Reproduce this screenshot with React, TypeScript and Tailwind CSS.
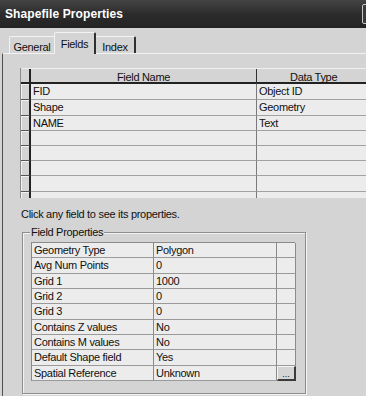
import React from 'react';

const fields = [
  { name: 'FID', type: 'Object ID' },
  { name: 'Shape', type: 'Geometry' },
  { name: 'NAME', type: 'Text' },
  { name: '', type: '' },
  { name: '', type: '' },
  { name: '', type: '' },
  { name: '', type: '' },
  { name: '', type: '' },
];

const rowHeights = ['h-[16px]', 'h-[16px]', 'h-[15px]', 'h-[15px]', 'h-[15px]', 'h-[15px]', 'h-[16px]', 'h-[16px]'];

const props = [
  { k: 'Geometry Type', v: 'Polygon', h: 'h-[15px]' },
  { k: 'Avg Num Points', v: '0', h: 'h-[16px]' },
  { k: 'Grid 1', v: '1000', h: 'h-[15px]' },
  { k: 'Grid 2', v: '0', h: 'h-[15px]' },
  { k: 'Grid 3', v: '0', h: 'h-[16px]' },
  { k: 'Contains Z values', v: 'No', h: 'h-[15px]' },
  { k: 'Contains M values', v: 'No', h: 'h-[15px]' },
  { k: 'Default Shape field', v: 'Yes', h: 'h-[16px]' },
  { k: 'Spatial Reference', v: 'Unknown', h: 'h-[15px]' },
];

export default function App() {
  return (
    <div className="w-[366px] h-[396px] overflow-hidden bg-[#d4d4d4] text-[#111] font-['Liberation_Sans',Arial,sans-serif] flex flex-col">
      {/* title bar */}
      <div className="h-[28px] shrink-0 flex items-center justify-between pl-[5px] bg-gradient-to-b from-[#444] via-[#2c2c2c] to-[#232323]">
        <span className="text-white font-bold text-[12px] tracking-[0.1px]">Shapefile Properties</span>
        <div className="w-[14px] h-[20px] -mr-[10px] border border-[#c8c8c8] rounded-[2px] bg-[#3a3a3a]" />
      </div>

      {/* tabs */}
      <div className="h-[25px] shrink-0 flex items-end pl-[9px] text-[11px] tracking-[-0.3px]">
        <div className="h-[17px] w-[45px] border-t border-l border-[#f2f2f2] rounded-tl-[2px] flex items-start justify-center pt-[2px]">
          General
        </div>
        <div className="h-[22px] w-[42px] -mb-[1px] relative z-10 bg-[#d4d4d4] border-t border-l border-[#f2f2f2] border-r-2 border-r-[#303030] rounded-t-[2px] flex items-start justify-center pt-[3px]">
          Fields
        </div>
        <div className="h-[17px] w-[40px] border-t border-[#f2f2f2] border-r-2 border-r-[#303030] rounded-tr-[2px] flex items-start justify-center pt-[2px]">
          Index
        </div>
      </div>

      {/* panel */}
      <div className="flex-1 ml-[2px] border-t border-t-[#f2f2f2] border-l border-l-[#505050] pl-[17px] pt-[14px] text-[11px] tracking-[-0.3px]">
        {/* fields grid */}
        <div className="h-[130px] overflow-hidden border-l border-[#8a8a8a] w-[400px]">
          <div className="grid grid-cols-[10px_226px_1fr] h-[16px] border-t border-[#efefef] border-b-2 border-b-[#222]">
            <div className="border-r-2 border-[#222]" />
            <div className="border-r border-[#333] flex items-center justify-center">Field Name</div>
            <div className="flex items-center pl-[33px]">Data Type</div>
          </div>
          {fields.map((f, i) => (
            <div key={i} className={`grid grid-cols-[10px_226px_1fr] ${rowHeights[i]}`}>
              <div className="bg-[#d4d4d4] border-r-2 border-r-[#222] border-b border-b-[#555] shadow-[inset_1px_1px_0_#f2f2f2]" />
              <div className="bg-[#ececec] border-r border-r-[#7a7a7a] border-b border-b-[#a2a2a2] pl-[2px] flex items-center leading-none">
                {f.name}
              </div>
              <div className="bg-[#ececec] border-b border-b-[#a2a2a2] pl-[2px] flex items-center leading-none">
                {f.type}
              </div>
            </div>
          ))}
        </div>

        <div className="mt-[10px] ml-[1px] leading-[13px]">Click any field to see its properties.</div>

        {/* field properties group */}
        <div className="relative mt-[11px] ml-[2px] w-[284px] h-[162px] border border-[#8e8e8e] shadow-[1px_1px_0_#f2f2f2,inset_1px_1px_0_#f2f2f2] pl-[8px] pt-[9px]">
          <span className="absolute -top-[7px] left-[7px] px-[1px] bg-[#d4d4d4] leading-[13px]">Field Properties</span>
          <div className="w-[264px] border-t border-l border-[#8a8a8a]">
            {props.map((p, i) => (
              <div key={i} className={`grid grid-cols-[122px_123px_19px] ${p.h}`}>
                <div className="bg-[#ececec] border-r border-r-[#8a8a8a] border-b border-b-[#9a9a9a] pl-[2px] flex items-center leading-none">
                  {p.k}
                </div>
                <div className="bg-[#ececec] border-r border-r-[#8a8a8a] border-b border-b-[#9a9a9a] pl-[2px] flex items-center leading-none">
                  {p.v}
                </div>
                {i === props.length - 1 ? (
                  <div className="bg-[#d4d4d4] border-t border-l border-[#f4f4f4] border-r-2 border-b-2 border-r-[#3a3a3a] border-b-[#3a3a3a] flex items-end justify-center text-[9px] leading-[9px] tracking-[0px]">
                    ...
                  </div>
                ) : (
                  <div className="bg-[#ececec] border-r border-r-[#8a8a8a] border-b border-b-[#9a9a9a]" />
                )}
              </div>
            ))}
          </div>
        </div>
      </div>
    </div>
  );
}
